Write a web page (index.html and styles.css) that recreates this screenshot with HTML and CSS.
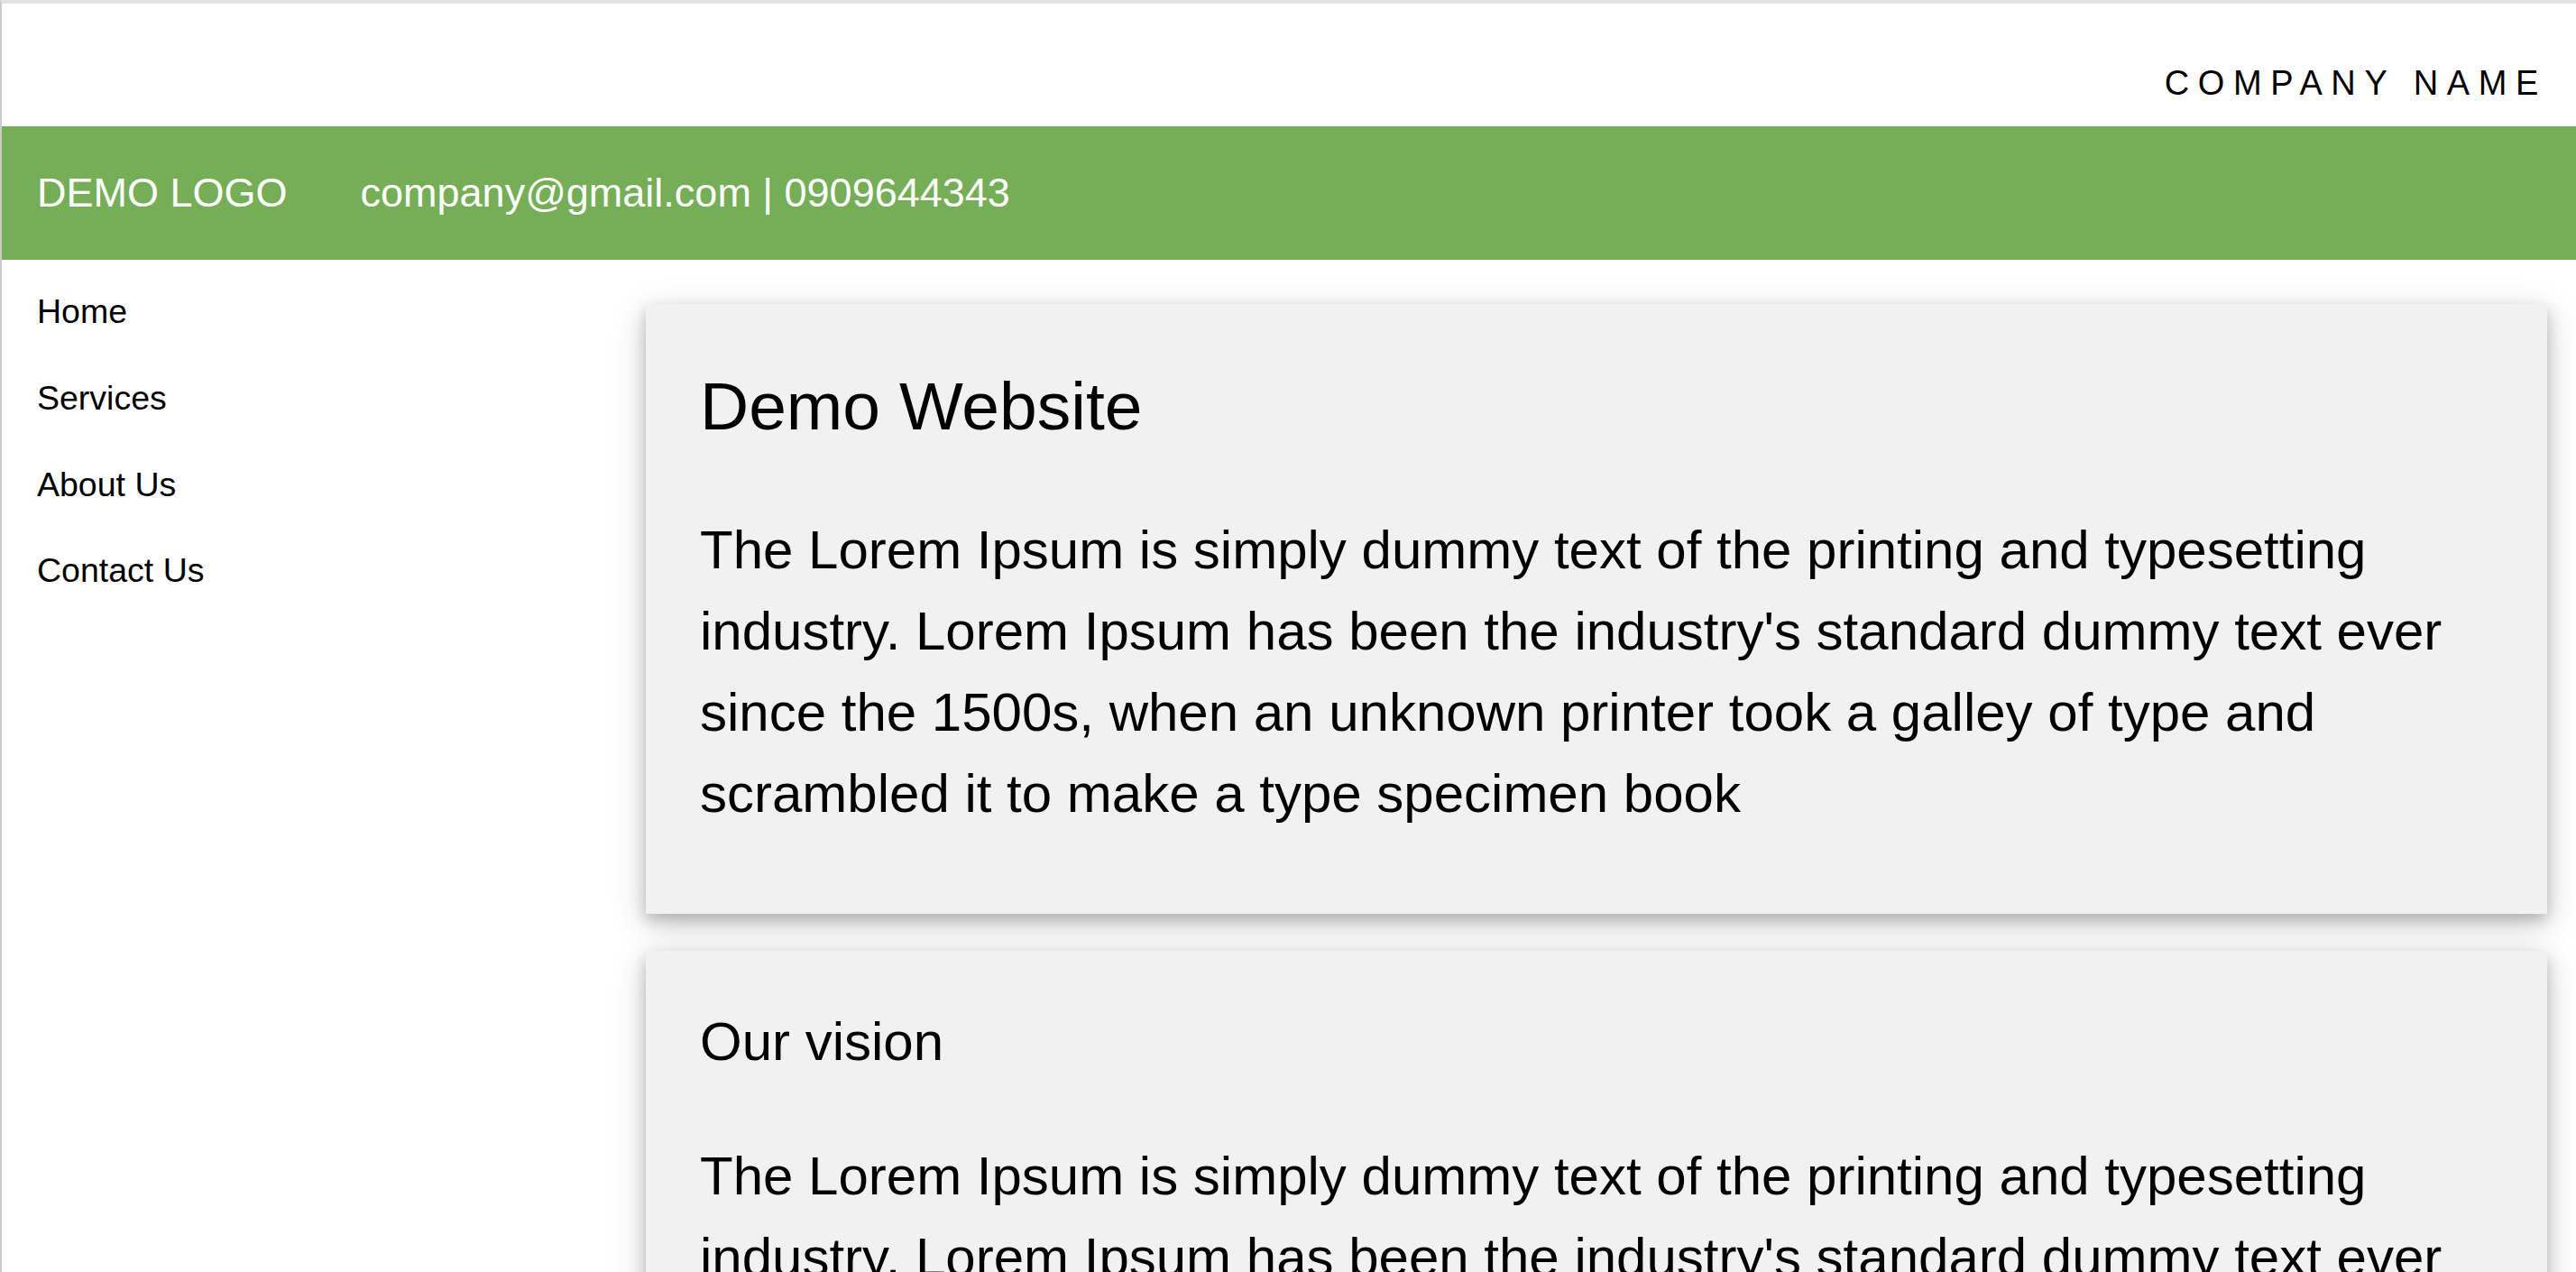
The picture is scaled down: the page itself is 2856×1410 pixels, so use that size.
FILE: index.html
```html
<!DOCTYPE html>
<html lang="en">
<head>
<meta charset="utf-8">
<title>Demo Website</title>
<link rel="stylesheet" href="styles.css">
</head>
<body>
<div class="page">
  <header class="topbar">
    <div class="company">COMPANY NAME</div>
  </header>
  <div class="brandbar">
    <div class="logo">DEMO LOGO</div>
    <div class="contact">company@gmail.com | 0909644343</div>
  </div>
  <div class="layout">
    <nav class="sidebar">
      <a class="nav-link" href="#">Home</a>
      <a class="nav-link" href="#">Services</a>
      <a class="nav-link" href="#">About Us</a>
      <a class="nav-link" href="#">Contact Us</a>
    </nav>
    <main class="content">
      <section class="card">
        <h1 class="card-title card-title--main">Demo Website</h1>
        <p class="card-text">The Lorem Ipsum is simply dummy text of the printing and typesetting industry. Lorem Ipsum has been the industry's standard dummy text ever since the 1500s, when an unknown printer took a galley of type and scrambled it to make a type specimen book</p>
      </section>
      <section class="card">
        <h2 class="card-title card-title--sub">Our vision</h2>
        <p class="card-text">The Lorem Ipsum is simply dummy text of the printing and typesetting industry. Lorem Ipsum has been the industry's standard dummy text ever since the 1500s, when an unknown printer took a galley of type and scrambled it to make a type specimen book</p>
      </section>
    </main>
  </div>
</div>
</body>
</html>
```

FILE: styles.css
```css
html, body {
  margin: 0;
  padding: 0;
  background: #ffffff;
}

body {
  font-family: "Liberation Sans", Arial, sans-serif;
  color: #000000;
}

.page {
  border-top: 4px solid #e3e3e3;
  border-left: 2px solid #cccccc;
  min-height: 100vh;
  box-sizing: border-box;
}

.topbar {
  height: 136px;
  box-sizing: border-box;
  padding: 67px 32px 0 0;
  display: flex;
  justify-content: flex-end;
  align-items: flex-start;
}

.company {
  font-size: 38px;
  letter-spacing: 9.6px;
  line-height: normal;
}

.brandbar {
  height: 148px;
  background: #75ae57;
  color: #ffffff;
  display: flex;
  align-items: center;
  gap: 81px;
  padding-left: 39px;
  box-sizing: border-box;
  font-size: 45px;
}

.layout {
  display: flex;
  align-items: flex-start;
}

.sidebar {
  width: 714px;
  flex: 0 0 714px;
  box-sizing: border-box;
  padding: 10px 0 0 39px;
  display: flex;
  flex-direction: column;
}

.nav-link {
  display: block;
  color: #000000;
  text-decoration: none;
  font-size: 37.5px;
  line-height: 41.8px;
  padding: 27px 0;
}

.content {
  flex: 1;
  padding: 49px 32px 40px 0;
  display: flex;
  flex-direction: column;
  gap: 41px;
}

.card {
  background: #f1f1f1;
  padding: 66px 60px 28px 60px;
  box-shadow: 0 7px 15px 0 rgba(0, 0, 0, 0.2), 0 11px 36px 0 rgba(0, 0, 0, 0.19);
}

.card-title {
  margin: 0;
  font-weight: normal;
  line-height: normal;
}

.card-title--main {
  font-size: 75px;
  margin-top: 4px;
}

.card-title--sub {
  font-size: 60px;
  margin-bottom: -2px;
}

.card-text {
  margin: 72px 0 60px 0;
  font-size: 60px;
  line-height: 90px;
}
```
